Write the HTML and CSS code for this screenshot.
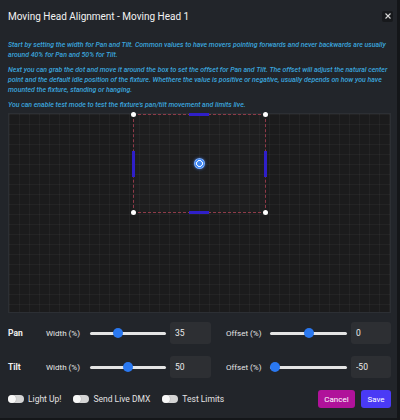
FILE: index.html
```html
<!DOCTYPE html>
<html>
<head>
<meta charset="utf-8">
<link rel="stylesheet" href="styles.css">
</head>
<body>
<div class="dialog">
  <div class="header">
    <h1 class="title">Moving Head Alignment - Moving Head 1</h1>
    <button class="close" aria-label="Close">
      <svg width="6" height="6" viewBox="0 0 6 6"><path d="M0.5 0.5L5.5 5.5M5.5 0.5L0.5 5.5" stroke="#d8d8d8" stroke-width="1.1"/></svg>
    </button>
  </div>
  <div class="desc">
    <p>Start by setting the width for Pan and Tilt. Common values to have movers pointing forwards and never backwards are usually around 40% for Pan and 50% for Tilt.</p>
    <p>Next you can grab the dot and move it around the box to set the offset for Pan and Tilt. The offset will adjust the natural center point and the default idle position of the fixture. Whethere the value is positive or negative, usually depends on how you have mounted the fixture, standing or hanging.</p>
    <p>You can enable test mode to test the fixture's pan/tilt movement and limits live.</p>
  </div>
  <div class="stage">
    <div class="box" style="left:32.5%; width:35%; top:0%; height:50%;">
      <span class="bar bar-top"></span>
      <span class="bar bar-bottom"></span>
      <span class="bar bar-left"></span>
      <span class="bar bar-right"></span>
      <span class="corner c-tl"></span>
      <span class="corner c-tr"></span>
      <span class="corner c-bl"></span>
      <span class="corner c-br"></span>
      <span class="dot"></span>
    </div>
  </div>
  <div class="controls">
    <div class="row">
      <span class="axis">Pan</span>
      <span class="lbl">Width (%)</span>
      <input class="slider" type="range" min="0" max="100" value="35">
      <input class="num" type="text" value="35">
      <span></span>
      <span class="lbl">Offset (%)</span>
      <input class="slider" type="range" min="-50" max="50" value="0">
      <input class="num" type="text" value="0">
    </div>
    <div class="row">
      <span class="axis">Tilt</span>
      <span class="lbl">Width (%)</span>
      <input class="slider" type="range" min="0" max="100" value="50">
      <input class="num" type="text" value="50">
      <span></span>
      <span class="lbl">Offset (%)</span>
      <input class="slider" type="range" min="-50" max="50" value="-50">
      <input class="num" type="text" value="-50">
    </div>
  </div>
  <div class="footer">
    <label class="toggle"><span class="switch"></span>Light Up!</label>
    <label class="toggle"><span class="switch"></span>Send Live DMX</label>
    <label class="toggle"><span class="switch"></span>Test Limits</label>
    <div class="buttons">
      <button class="btn btn-cancel">Cancel</button>
      <button class="btn btn-save">Save</button>
    </div>
  </div>
</div>
</body>
</html>
```
FILE: styles.css
```css
* { box-sizing: border-box; }
html, body { margin: 0; padding: 0; }
body {
  background: #141619;
  font-family: Roboto, "Liberation Sans", sans-serif;
  width: 400px;
  height: 420px;
  overflow: hidden;
}
.dialog {
  width: 397px;
  height: 418px;
  background: #22252a;
  padding: 0 6px 0 8px;
  display: flex;
  flex-direction: column;
}
.header {
  height: 30px;
  display: flex;
  align-items: center;
  justify-content: space-between;
  padding-top: 2px;
}
.title {
  margin: 0;
  font-size: 10px;
  font-weight: 400;
  color: #f2f2f2;
}
.close {
  width: 11px;
  height: 11px;
  margin-right: -2px;
  padding: 0;
  border: none;
  border-radius: 2px;
  background: #17191c;
  display: flex;
  align-items: center;
  justify-content: center;
}
.desc {
  padding-top: 10px;
}
.desc p {
  margin: 0 0 5px 0;
  font-size: 6.95px;
  line-height: 10px;
  font-style: italic;
  font-weight: 500;
  color: #3ba6de;
}
.desc p:last-child { margin-bottom: 0; }
.stage {
  position: relative;
  margin-top: 3px;
  height: 200px;
  border: 1px solid #2c2f34;
  background-color: #1b1b1c;
  background-image:
    linear-gradient(to right, rgba(255,255,255,0.035) 1px, transparent 1px),
    linear-gradient(to bottom, rgba(255,255,255,0.035) 1px, transparent 1px);
  background-size: 10px 10px;
}
.box {
  position: absolute;
  border: 1px dashed #8e3a48;
  background: rgba(255,255,255,0.015);
}
.bar {
  position: absolute;
  background: #2f1fc8;
}
.bar-top, .bar-bottom {
  width: 20px;
  height: 3px;
  left: 50%;
  margin-left: -10px;
}
.bar-top { top: -2px; }
.bar-bottom { bottom: -2px; }
.bar-left, .bar-right {
  width: 3px;
  height: 26px;
  top: 50%;
  margin-top: -13px;
}
.bar-left { left: -2px; }
.bar-right { right: -2px; }
.corner {
  position: absolute;
  width: 5px;
  height: 5px;
  border-radius: 50%;
  background: #ffffff;
}
.c-tl { left: -3px; top: -3px; }
.c-tr { right: -3px; top: -3px; }
.c-bl { left: -3px; bottom: -3px; }
.c-br { right: -3px; bottom: -3px; }
.dot {
  position: absolute;
  left: 50%;
  top: 50%;
  width: 11px;
  height: 11px;
  margin: -5.5px 0 0 -5.5px;
  border-radius: 50%;
  background: radial-gradient(circle, #3f86f2 0 2.2px, #eaf2ff 2.4px 3.4px, #4b8ff5 3.6px 4.6px, #7fb0ff 4.8px);
  box-shadow: 0 0 3px rgba(80,140,255,0.7);
}
.controls {
  margin-top: 9px;
  display: flex;
  flex-direction: column;
  gap: 12px;
}
.row {
  display: grid;
  grid-template-columns: 38px 44px 80px 41px 15px 44px 81px 40px;
  align-items: center;
  height: 22px;
}
.axis {
  font-size: 8.5px;
  font-weight: 700;
  color: #f0f0f0;
}
.lbl {
  font-size: 8px;
  color: #e6e6e6;
}
.slider {
  -webkit-appearance: none;
  appearance: none;
  width: calc(100% - 4px);
  height: 10px;
  margin: 0;
  padding: 0;
  background: transparent;
}
.slider::-webkit-slider-runnable-track {
  height: 3px;
  border-radius: 2px;
  background: #e4e4e4;
}
.slider::-webkit-slider-thumb {
  -webkit-appearance: none;
  width: 10px;
  height: 10px;
  margin-top: -3.5px;
  border-radius: 50%;
  background: #2a78f0;
  border: none;
}
.num {
  width: 100%;
  height: 22px;
  margin: 0;
  padding: 0 0 0 5px;
  border: none;
  border-radius: 3px;
  background: #2d2f33;
  color: #ececec;
  font-family: Roboto, "Liberation Sans", sans-serif;
  font-size: 8.5px;
  outline: none;
}
.footer {
  margin-top: 12px;
  height: 18px;
  display: flex;
  align-items: center;
  gap: 12px;
}
.toggle {
  display: flex;
  align-items: center;
  gap: 4px;
  font-size: 8.5px;
  color: #e2e2e2;
}
.switch {
  position: relative;
  width: 16px;
  height: 8px;
  border-radius: 4px;
  background: #d4d4d4;
}
.switch::after {
  content: "";
  position: absolute;
  left: 0;
  top: 0;
  width: 8px;
  height: 8px;
  border-radius: 50%;
  background: #f7f7f7;
  box-shadow: 0 0 1px rgba(0,0,0,0.4);
}
.buttons {
  margin-left: auto;
  display: flex;
  gap: 6px;
}
.btn {
  height: 18px;
  border: none;
  border-radius: 3px;
  padding: 0;
  font-family: Roboto, "Liberation Sans", sans-serif;
  font-size: 8px;
  color: #ffffff;
}
.btn-cancel {
  width: 37px;
  background: #b0129a;
}
.btn-save {
  width: 30px;
  background: #4a3af5;
}
```
